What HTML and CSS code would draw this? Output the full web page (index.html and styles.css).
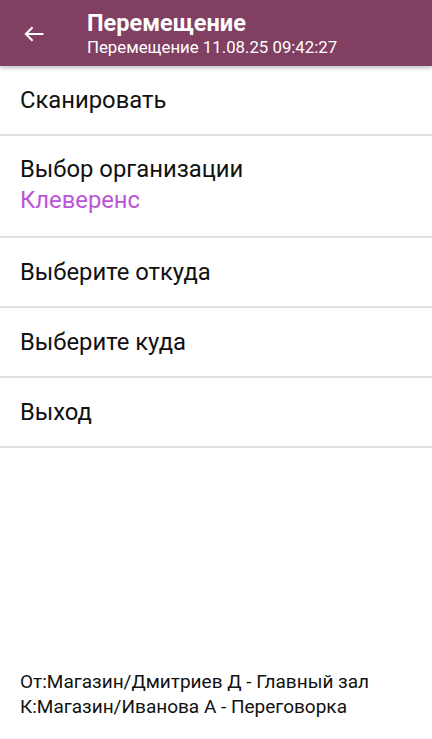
FILE: index.html
```html
<!DOCTYPE html>
<html lang="ru">
<head>
<meta charset="utf-8">
<link rel="stylesheet" href="styles.css">
</head>
<body>
<div class="screen">
  <header class="bar">
    <div class="back">
      <svg width="20" height="16" viewBox="0 0 20 16"><path d="M19.5 8H1.8M8.6 1.2L1.8 8l6.8 6.8" fill="none" stroke="#fff" stroke-width="2"/></svg>
    </div>
    <div class="titles">
      <div class="title">Перемещение</div>
      <div class="subtitle">Перемещение 11.08.25 09:42:27</div>
    </div>
  </header>
  <ul class="menu">
    <li class="item">Сканировать</li>
    <li class="item tall"><span>Выбор организации</span><span class="value">Клеверенс</span></li>
    <li class="item">Выберите откуда</li>
    <li class="item">Выберите куда</li>
    <li class="item">Выход</li>
  </ul>
  <div class="spacer"></div>
  <footer class="info">
    <div>От:Магазин/Дмитриев Д - Главный зал</div>
    <div>К:Магазин/Иванова А - Переговорка</div>
  </footer>
</div>
</body>
</html>
```
FILE: styles.css
```css
html, body { margin: 0; padding: 0; }
body { font-family: Roboto, "Noto Sans", sans-serif; background: #fff; color: #111; }
.screen { width: 432px; height: 739px; display: flex; flex-direction: column; overflow: hidden; }
.bar { height: 66px; background: #813f62; display: flex; align-items: center; box-shadow: 0 2px 4px rgba(0,0,0,0.25); position: relative; z-index: 1; flex-shrink: 0; }
.back { width: 20px; height: 16px; margin-left: 24px; margin-right: 43px; margin-top: 2px; }
.back svg { display: block; }
.titles { display: flex; flex-direction: column; color: #fff; padding-bottom: 1px; }
.title { font-size: 23.5px; font-weight: 700; line-height: 28px; }
.subtitle { font-size: 16.8px; line-height: 20px; }
.menu { list-style: none; margin: 0; padding: 0; }
.item { height: 68px; border-bottom: 2px solid #e2e2e2; font-size: 23.8px; display: flex; align-items: center; padding-left: 20px; color: #111; }
.item.tall { flex-direction: column; align-items: flex-start; justify-content: center; line-height: 31px; box-sizing: border-box; height: 102px; padding-bottom: 2px; }
.value { color: #bb55d6; }
.spacer { flex: 1; }
.info { padding: 0 20px 20px; font-size: 19px; line-height: 25px; color: #111; }
```
